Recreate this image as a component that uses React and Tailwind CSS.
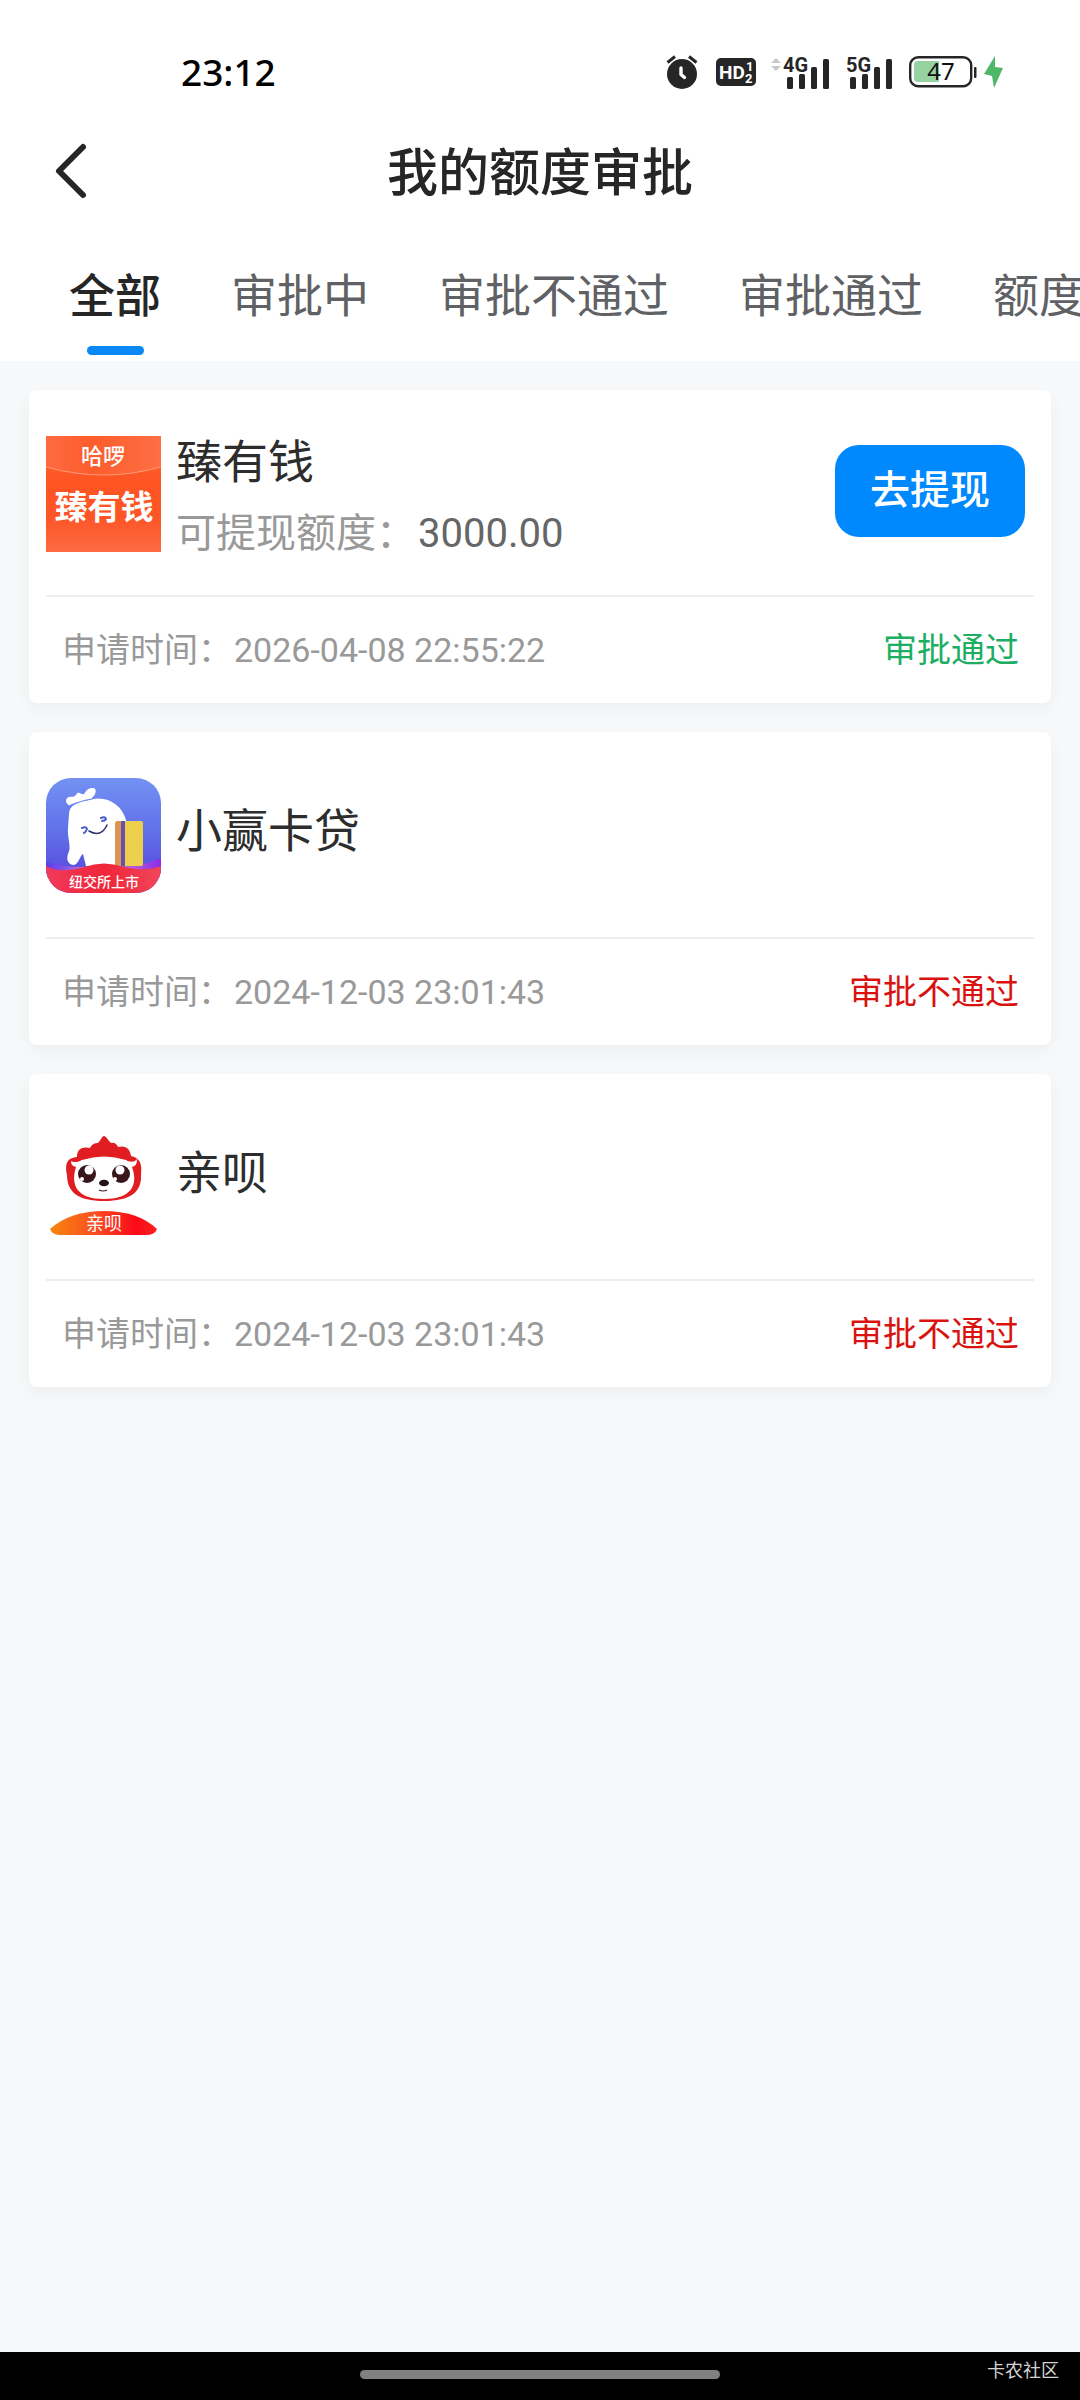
import React, { useState } from 'react'

const CJK = '"Noto Sans CJK SC", sans-serif';

const TABS = ['全部', '审批中', '审批不通过', '审批通过', '额度过期'];

const AlarmIcon = () => (
  <svg width="32" height="34" viewBox="0 0 32 34" fill="none" aria-hidden="true">
    <circle cx="16" cy="19" r="15" fill="#262626" />
    <path d="M1.5 7.5 L9 1.5 M30.5 7.5 L23 1.5" stroke="#262626" strokeWidth="3" />
    <path d="M15 13 V19.5 L18.5 22.5" stroke="#fff" strokeWidth="3.4" strokeLinecap="round" strokeLinejoin="round" />
  </svg>
);

const HdIcon = () => (
  <svg width="40" height="28" viewBox="0 0 40 28" fontFamily="Roboto, sans-serif" fill="#fff" aria-hidden="true">
    <rect width="40" height="28" rx="5" fill="#262626" />
    <text x="3" y="21" fontSize="19" fontWeight="700">HD</text>
    <text x="30" y="13" fontSize="13" fontWeight="700">1</text>
    <text x="29" y="25" fontSize="13" fontWeight="700">2</text>
  </svg>
);

const SignalIcon = ({ label, arrows }) => (
  <svg width={arrows ? 60 : 46} height="45" viewBox={arrows ? '-14 -6 60 45' : '0 -6 46 45'} fill="#262626" aria-hidden="true">
    {arrows && <path d="M-13 7 L-8 2 L-3 7 Z M-13 10 L-8 15 L-3 10 Z" fill="#c9c9c9" />}
    <text x="-1" y="16" fontSize="20" fontWeight="700" fontFamily="Roboto, sans-serif">{label}</text>
    <rect x="3" y="21" width="6" height="12" rx="1.5" />
    <rect x="15" y="18" width="6" height="15" rx="1.5" />
    <rect x="27" y="11" width="6" height="22" rx="1.5" />
    <rect x="39" y="3" width="6" height="30" rx="1.5" />
  </svg>
);

const BatteryIcon = () => (
  <svg width="94" height="32" viewBox="0 0 94 32" aria-hidden="true">
    <rect x="1.2" y="1.2" width="61" height="29" rx="8" fill="#fff" stroke="#262626" strokeWidth="2.4" />
    <path d="M9 5 H30 V26 H9 a4 4 0 0 1 -4 -4 V9 a4 4 0 0 1 4 -4 Z" fill="#97d3a2" />
    <rect x="65" y="11" width="2.5" height="11" rx="1" fill="#262626" />
    <text x="32" y="24" fontSize="24" textAnchor="middle" fontFamily="Noto Sans, sans-serif" fill="#111">47</text>
    <path d="M86 0 L75 18 L83 20 L85 32 L94 12 L86 11 Z" fill="#4fb868" />
  </svg>
);

// orange square logo
const ZhenLogo = () => (
  <svg viewBox="0 0 115 116" className="w-full" fontFamily={CJK} fill="#fff" textAnchor="middle" aria-hidden="true">
    <defs>
      <linearGradient id="zhenBg" x1="0" y1="0" x2="0" y2="1">
        <stop offset="0" stopColor="#fd6536" />
        <stop offset="0.4" stopColor="#fe5423" />
        <stop offset="0.7" stopColor="#fd5527" />
        <stop offset="1" stopColor="#fd6b42" />
      </linearGradient>
      <linearGradient id="zhenTop" x1="0" y1="0" x2="1" y2="0">
        <stop offset="0" stopColor="#fd6b42" />
        <stop offset="0.4" stopColor="#fd5c2b" />
        <stop offset="1" stopColor="#fd6f45" />
      </linearGradient>
    </defs>
    <rect width="115" height="116" fill="url(#zhenBg)" />
    <path d="M0 0 H115 V31 Q58 47 0 31 Z" fill="url(#zhenTop)" />
    <path d="M0 31 Q58 47 115 31" fill="none" stroke="#ff9a78" strokeWidth="1" />
    <text x="57" y="28" fontSize="22" fontWeight="500">哈啰</text>
    <text x="58" y="83" fontSize="33" fontWeight="700">臻有钱</text>
  </svg>
);

// blue rounded logo with the white mascot and a wallet
const XiaoyingLogo = () => (
  <svg viewBox="0 0 115 115" className="w-full" aria-hidden="true">
    <defs>
      <linearGradient id="xyBg" x1="0" y1="0" x2="0" y2="1">
        <stop offset="0" stopColor="#7391f3" />
        <stop offset="0.5" stopColor="#5f6ee8" />
        <stop offset="0.8" stopColor="#5a4fe0" />
      </linearGradient>
      <linearGradient id="xyBand" x1="0" y1="0" x2="1" y2="0">
        <stop offset="0" stopColor="#f23a5c" />
        <stop offset="0.5" stopColor="#ef2638" />
        <stop offset="1" stopColor="#f2455a" />
      </linearGradient>
      <linearGradient id="xyGlow" x1="0" y1="0" x2="1" y2="0">
        <stop offset="0" stopColor="#5b3bf0" />
        <stop offset="0.5" stopColor="#e58ac8" />
        <stop offset="1" stopColor="#8a2be8" />
      </linearGradient>
      <clipPath id="xyClip"><rect width="115" height="115" rx="25" /></clipPath>
    </defs>
    <g clipPath="url(#xyClip)">
      <rect width="115" height="115" fill="url(#xyBg)" />
      <path d="M0 84 Q25 92 57 87 Q90 92 115 80 V100 H0 Z" fill="url(#xyGlow)" />
      {/* body */}
      <path d="M23 36 C23 27 32 24 47 21 C62 18 76 27 80 42 L88 88 H40 L37 76 C34 77 33 86 28 87 C22 87 20 81 22 76 C26 69 21 60 22 50 Z" fill="#fff" />
      {/* hat */}
      <path d="M23 28 C17 24 19 18 26 18 C30 19 29 15 32 14 C35 14 36 17 38 15 C40 10 48 7 50 11 C52 17 46 20 46 21 C40 22 31 24 23 28 Z" fill="#fff" stroke="#6b86ef" strokeWidth="1.2" strokeLinejoin="round" />
      <path d="M43 53 Q55 60 61 47" fill="none" stroke="#30336e" strokeWidth="1.6" strokeLinecap="round" />
      <path d="M36 50 q4 -2 5 1 q-1 3 -3 4 M55 40 q4 -2 5 1 q-1 2 -4 2" fill="none" stroke="#4a5bd0" strokeWidth="2" strokeLinecap="round" />
      <rect x="69" y="43" width="28" height="45" rx="2" fill="#ecd04c" />
      <path d="M71 43 H75 V88 H69 V45 Z" fill="#dc9653" />
      <rect x="75" y="43" width="4" height="45" fill="#6750ae" />
      <path d="M0 88 Q14 96 38 89 Q58 82 78 89 Q100 94 115 88 V115 H0 Z" fill="url(#xyBand)" />
      <text x="58" y="109" fontSize="14" fontWeight="500" textAnchor="middle" fill="#fff" fontFamily={CJK}>纽交所上市</text>
    </g>
  </svg>
);

// hedgehog face above an orange to red banner
const QinbeiLogo = () => (
  <svg viewBox="0 0 115 115" className="w-full" aria-hidden="true">
    <defs>
      <linearGradient id="qbBand" x1="0" y1="0" x2="1" y2="0">
        <stop offset="0" stopColor="#f8860c" />
        <stop offset="0.45" stopColor="#fa4a20" />
        <stop offset="0.8" stopColor="#fb0a18" />
        <stop offset="1" stopColor="#fb2020" />
      </linearGradient>
    </defs>
    <g transform="translate(0 8)">
      <path d="M21 47 C19 37 20 30 31 29 C31 22 35 18 44 20 C46 16 49 15 52 15 C55 12 56 8 58 8 C60 8 62 12 65 15 C68 14 71 16 72 19 C80 17 84 21 85 28 C95 30 96 37 95 47 C96 64 84 73 58 73 C32 73 21 64 21 47 Z" fill="#e01d20" />
      <path d="M25 33 C28 35 33 34 36 32 Q58 25 80 32 C83 34 88 35 91 31 C91 37 89 38 86 39 C93 58 84 71 58 71 C32 71 24 58 30 39 C27 38 25 37 25 33 Z" fill="#fff" />
      <ellipse cx="41" cy="46" rx="9" ry="9" fill="#38171a" />
      <ellipse cx="75" cy="46" rx="9" ry="9" fill="#38171a" />
      <circle cx="43" cy="42" r="4.5" fill="#fff" />
      <circle cx="74" cy="42" r="4.5" fill="#fff" />
      <circle cx="36" cy="51" r="2" fill="#fff" />
      <circle cx="69" cy="51" r="2" fill="#fff" />
      <ellipse cx="58" cy="55" rx="5" ry="3.2" fill="#241516" />
      <path d="M53 62 q4 2 8 0" fill="none" stroke="#3a2020" strokeWidth="1.2" />
      <path d="M4 101 Q24 83 58 83 Q92 83 111 101 Q109 107 100 107 H15 Q6 107 4 101 Z" fill="url(#qbBand)" />
      <text x="58" y="102" fontSize="18" textAnchor="middle" fill="#fff" fontFamily={CJK}>亲呗</text>
    </g>
  </svg>
);

const RECORDS = [
  { name: '臻有钱', logo: ZhenLogo, amount: '3000.00', time: '2026-04-08 22:55:22', status: '审批通过', passed: true },
  { name: '小赢卡贷', logo: XiaoyingLogo, time: '2024-12-03 23:01:43', status: '审批不通过', passed: false },
  { name: '亲呗', logo: QinbeiLogo, time: '2024-12-03 23:01:43', status: '审批不通过', passed: false },
];

const RecordCard = ({ record }) => {
  const Logo = record.logo;
  return (
    <li className="rounded-lg bg-white px-[17px] shadow-[0_6px_16px_rgba(0,0,0,0.04)]">
      <div className="flex h-[205px] items-center pt-0.5 pr-[9px]">
        <div className="w-[115px] shrink-0">
          <Logo />
        </div>
        <div className={record.amount ? 'ml-[15px] flex-1 pt-2' : 'ml-[15px] flex-1 pb-2.5'}>
          <h2 className="text-[46px] leading-[72px] text-[#2d2d2d]">{record.name}</h2>
          {record.amount && (
            <p className="text-[40px] leading-[72px] text-[#999]">
              可提现额度：<span className="ml-0.5 text-[#666]">{record.amount}</span>
            </p>
          )}
        </div>
        {record.amount && (
          <button type="button" className="mb-1.5 h-[92px] w-[190px] rounded-3xl bg-[#0088ff] text-[40px] leading-none font-medium text-white">
            去提现
          </button>
        )}
      </div>
      <div className="flex h-[108px] items-center justify-between border-t-2 border-[#eeeeee] pr-[15px] pl-4 text-[34px] leading-[48px]">
        <p className="text-[#999]">申请时间：<time className="ml-0.5">{record.time}</time></p>
        <p className={record.passed ? 'text-[#1cae62]' : 'text-[#d9130f]'}>{record.status}</p>
      </div>
    </li>
  );
};

const App = () => {
  const [activeTab, setActiveTab] = useState(TABS[0]);

  return (
    <div className="flex min-h-screen flex-col bg-[#f7f8fa] font-[Roboto,'Noto_Sans_CJK_SC',sans-serif]">
      <header className="bg-white">
        {/* phone status bar */}
        <div className="flex h-[114px] items-center justify-between pt-[30px] pr-[77px] pl-[181px]">
          <span className="font-['Noto_Sans',sans-serif] text-[37px] leading-[48px] font-medium text-black">23:12</span>
          <div className="flex items-center">
            <AlarmIcon />
            <div className="ml-[18px]"><HdIcon /></div>
            <div className="ml-[14px]"><SignalIcon label="4G" arrows /></div>
            <div className="ml-[17px]"><SignalIcon label="5G" /></div>
            <div className="ml-4"><BatteryIcon /></div>
          </div>
        </div>

        <div className="grid h-[114px] grid-cols-[1fr_auto_1fr] items-center">
          <button type="button" aria-label="返回" className="ml-[54px] w-fit">
            <svg width="34" height="58" viewBox="0 0 34 58" fill="none">
              <path d="M29 5 L5 29 L29 53" stroke="#262626" strokeWidth="6" strokeLinecap="round" strokeLinejoin="round" />
            </svg>
          </button>
          <h1 className="pt-1.5 text-[51px] leading-[72px] font-medium text-[#262626]">我的额度审批</h1>
        </div>

        <nav className="flex h-[133px] gap-[70px] overflow-hidden pl-[69px]">
          {TABS.map((tab) => (
            <button
              key={tab}
              type="button"
              onClick={() => setActiveTab(tab)}
              className="flex shrink-0 flex-col items-center pt-[34px] text-[46px] leading-[68px] text-[#5f6165]"
            >
              <span className={activeTab === tab ? 'font-medium text-[#262626]' : ''}>{tab}</span>
              {activeTab === tab && <span className="mt-4 h-[9px] w-[57px] rounded-full bg-[#0a88f5]" />}
            </button>
          ))}
        </nav>
      </header>

      <main className="flex-1 px-[29px] pt-[29px]">
        <ul className="flex flex-col gap-[29px]">
          {RECORDS.map((record) => (
            <RecordCard key={record.name} record={record} />
          ))}
        </ul>
      </main>

      <footer className="grid h-12 grid-cols-3 items-center bg-black">
        <div className="col-start-2 mb-1 h-[9px] rounded-full bg-[#808080]" />
        <span className="pr-[21px] pb-2.5 text-right text-lg leading-none text-[#d4d4d4]">卡农社区</span>
      </footer>
    </div>
  )
}

export default App
